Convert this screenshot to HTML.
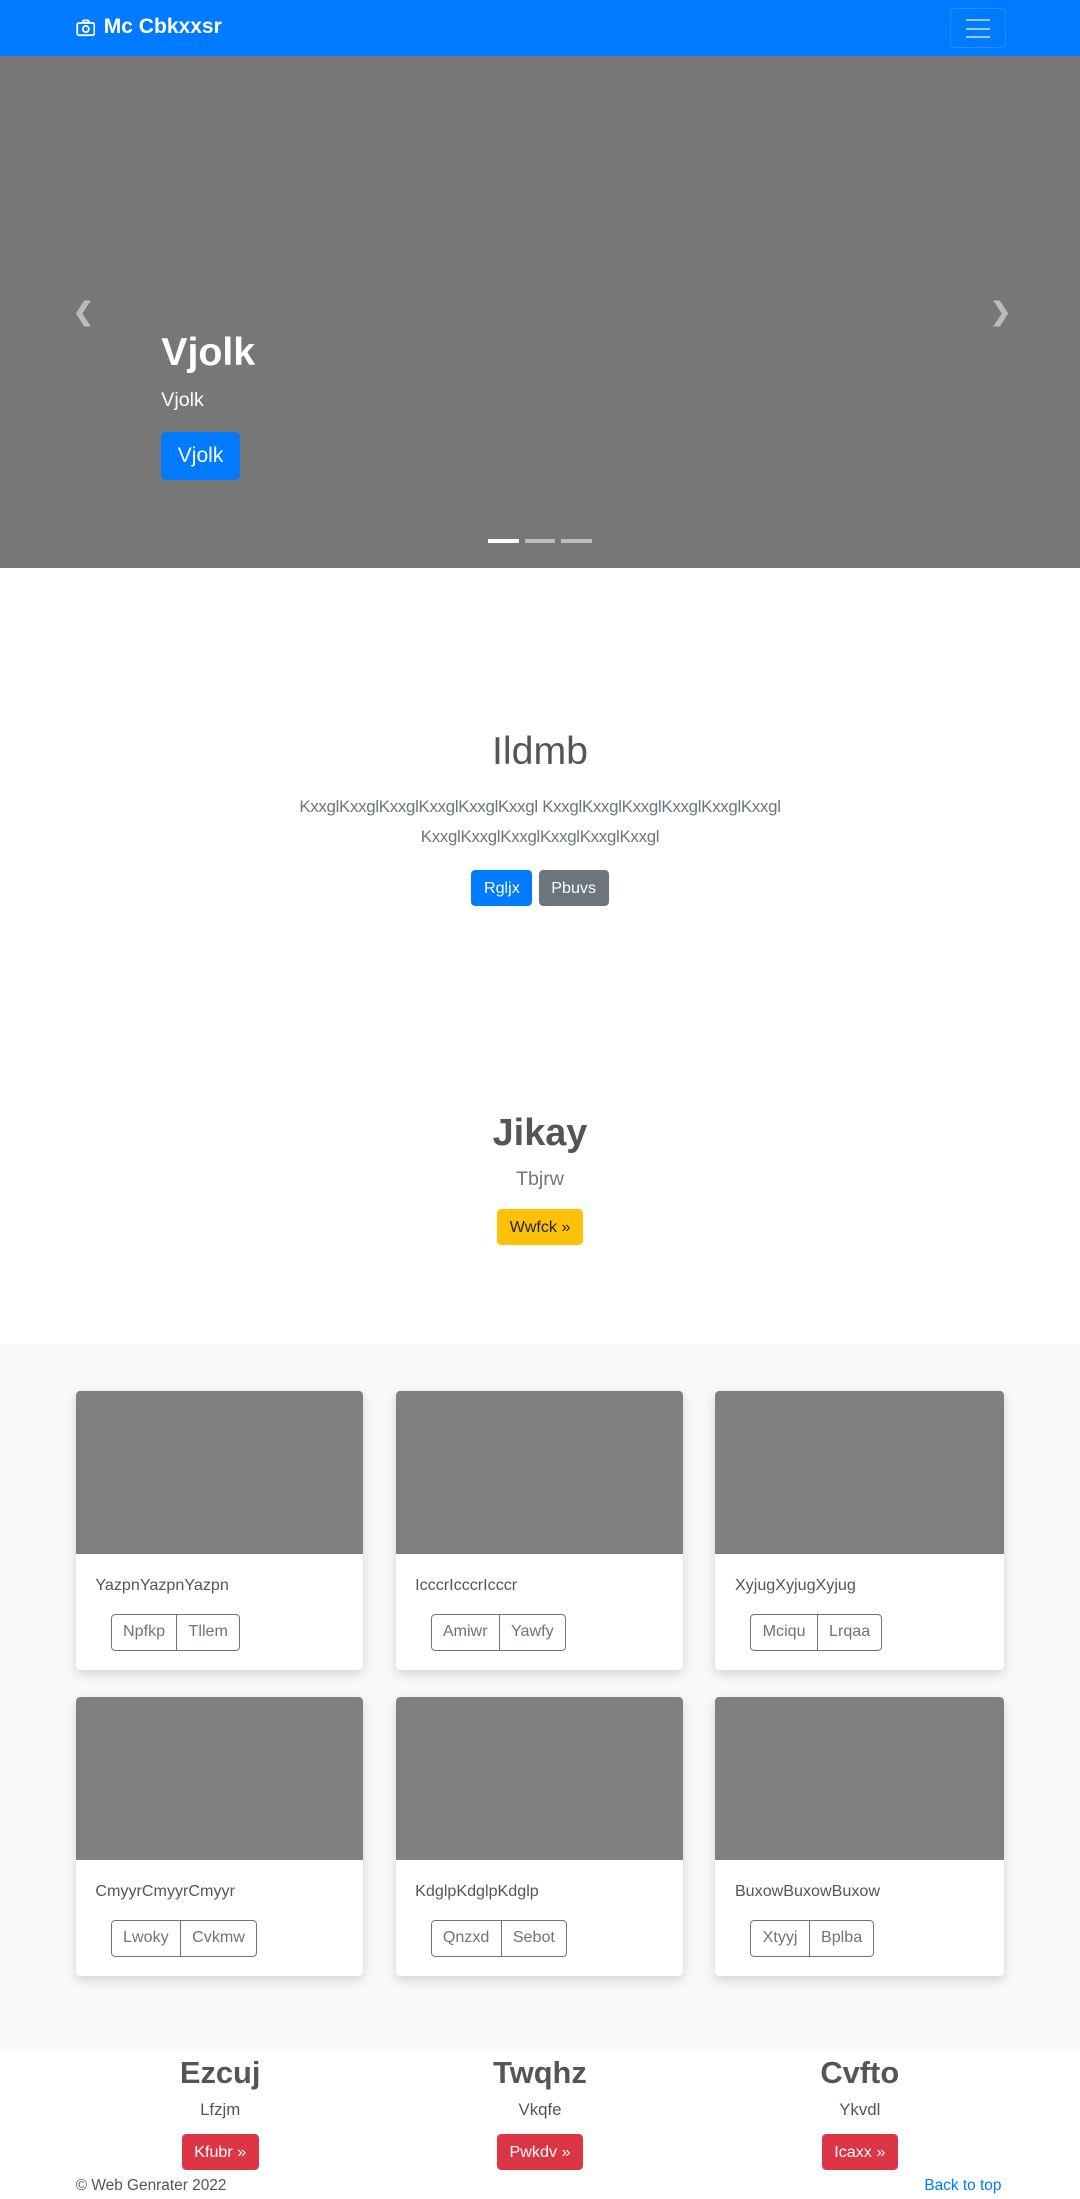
<!DOCTYPE html>
<html><head><meta charset="utf-8"><style>
html{zoom:1.4026}
body{margin:0;width:770px;font-family:"Liberation Sans",sans-serif;color:#212529;background:#fff}
*{box-sizing:border-box}
.nav{height:40px;background:#007bff;position:relative}
.brand{position:absolute;left:54px;top:11px;color:#fff;font-weight:bold;font-size:15px;display:flex;align-items:center;gap:6px}
.tog{position:absolute;left:677px;top:6px;width:40px;height:28px;border:1px solid rgba(255,255,255,.15);border-radius:4px}
.tog i{position:absolute;left:11px;width:17px;height:1.5px;background:rgba(255,255,255,.6)}
.car{height:365px;background:#777;position:relative;color:#fff}
.car h1{position:absolute;left:115px;top:195px;margin:0;font-size:28px}
.car p{position:absolute;left:115px;top:237px;margin:0;font-size:14px}
.cbtn{position:absolute;left:115px;top:268px;width:56px;height:34px;background:#007bff;border-radius:4px;font-size:15px;text-align:center;line-height:34px}
.ind{position:absolute;top:344px;height:3px;width:22px;background:rgba(255,255,255,.5)}
.arr{position:absolute;top:172px;font-size:18px;color:rgba(255,255,255,.5);font-weight:bold}
.c{text-align:center}
.btn{display:inline-block;color:#fff;border-radius:3px;font-size:11.5px;height:26px;line-height:26px;padding:0 9px}
.gray{background:#f8f9fa;height:504px;position:relative;margin-top:0}
.card{position:absolute;width:205px;height:199px;background:#fff;border-radius:3px;box-shadow:0 3px 8px rgba(0,0,0,.15);overflow:hidden}
.card .im{height:116px;background:#808080}
.card .t{position:absolute;left:14px;top:132px;font-size:11.5px;color:#555}
.grp{position:absolute;left:25px;top:159px;display:flex;border:1px solid #6c757d;border-radius:3px;height:26px}
.grp span{font-size:11.5px;color:#6c757d;line-height:24px;padding:0 8px}
.grp span+span{border-left:1px solid #6c757d}
.col{position:absolute;width:240px;text-align:center}
.col h3{margin:0;font-size:22px;color:#555;line-height:26px}
.col p{margin:6px 0 10px;font-size:12px;color:#555}
.red{background:#dc3545}
.lines div{white-space:nowrap}
</style></head><body>
<div class="nav"><div class="brand"><svg width="14" height="14" viewBox="0 0 16 16" fill="none" stroke="#fff" stroke-width="1.5"><rect x="1" y="4" width="14" height="10" rx="1.5"/><path d="M5 4l1.2-2h3.6L11 4"/><circle cx="8" cy="9" r="2.5"/></svg>Mc Cbkxxsr</div>
<div class="tog"><i style="top:7px"></i><i style="top:13px"></i><i style="top:19px"></i></div></div>
<div class="car">
<div class="arr" style="left:52px">&#10094;</div><div class="arr" style="left:706px">&#10095;</div>
<h1>Vjolk</h1><p>Vjolk</p><div class="cbtn">Vjolk</div>
<div class="ind" style="left:348px;background:#fff"></div><div class="ind" style="left:374px"></div><div class="ind" style="left:400px"></div>
</div>
<div class="c" style="height:553px;position:relative">
<div style="position:absolute;top:115px;width:100%;font-size:28px;font-weight:300;color:#555">Ildmb</div>
<div class="lines" style="position:absolute;top:160px;width:100%;font-size:12px;letter-spacing:-0.2px;color:#6c757d;line-height:21px"><div>KxxglKxxglKxxglKxxglKxxglKxxgl KxxglKxxglKxxglKxxglKxxglKxxgl</div><div>KxxglKxxglKxxglKxxglKxxglKxxgl</div></div>
<div style="position:absolute;top:215px;width:100%"><span class="btn" style="background:#007bff">Rgljx</span> <span class="btn" style="background:#6c757d">Pbuvs</span></div>
<div style="position:absolute;top:388px;width:100%;font-size:27px;font-weight:bold;color:#555">Jikay</div>
<div style="position:absolute;top:428px;width:100%;font-size:14px;color:#777">Tbjrw</div>
<div style="position:absolute;top:457px;width:100%"><span class="btn" style="background:#ffc107;color:#212529">Wwfck »</span></div>
</div>
<div class="gray">
<div class="card" style="left:54px;top:34px"><div class="im"></div><div class="t">YazpnYazpnYazpn</div><div class="grp"><span>Npfkp</span><span>Tllem</span></div></div>
<div class="card" style="left:282px;top:34px"><div class="im"></div><div class="t">IcccrIcccrIcccr</div><div class="grp"><span>Amiwr</span><span>Yawfy</span></div></div>
<div class="card" style="left:510px;top:34px;width:206px"><div class="im"></div><div class="t">XyjugXyjugXyjug</div><div class="grp"><span>Mciqu</span><span>Lrqaa</span></div></div>
<div class="card" style="left:54px;top:252px"><div class="im"></div><div class="t">CmyyrCmyyrCmyyr</div><div class="grp"><span>Lwoky</span><span>Cvkmw</span></div></div>
<div class="card" style="left:282px;top:252px"><div class="im"></div><div class="t">KdglpKdglpKdglp</div><div class="grp"><span>Qnzxd</span><span>Sebot</span></div></div>
<div class="card" style="left:510px;top:252px;width:206px"><div class="im"></div><div class="t">BuxowBuxowBuxow</div><div class="grp"><span>Xtyyj</span><span>Bplba</span></div></div>
</div>
<div style="position:relative;height:106px">
<div class="col" style="left:37px;top:3px"><h3>Ezcuj</h3><p>Lfzjm</p><span class="btn red">Kfubr »</span></div>
<div class="col" style="left:265px;top:3px"><h3>Twqhz</h3><p>Vkqfe</p><span class="btn red">Pwkdv »</span></div>
<div class="col" style="left:493px;top:3px"><h3>Cvfto</h3><p>Ykvdl</p><span class="btn red">Icaxx »</span></div>
<div style="position:absolute;left:54px;top:90px;font-size:11px;color:#555">© Web Genrater 2022</div>
<div style="position:absolute;left:659px;top:90px;font-size:11px;color:#007bff">Back to top</div>
</div>
</body></html>
